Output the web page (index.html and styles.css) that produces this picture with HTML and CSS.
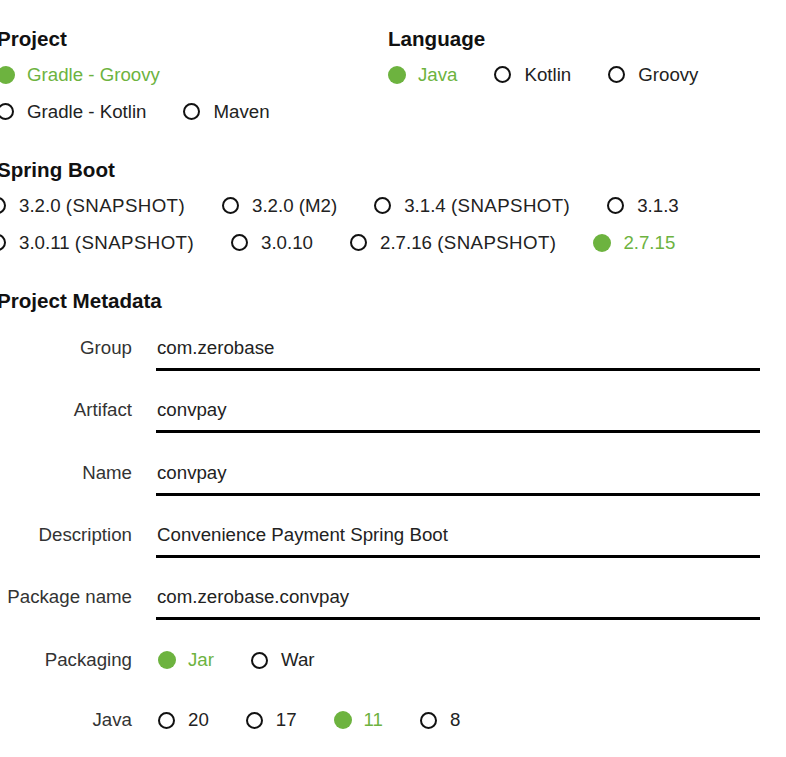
FILE: index.html
```html
<!DOCTYPE html>
<html lang="en">
<head>
<meta charset="utf-8">
<title>Spring Initializr</title>
<link rel="stylesheet" href="styles.css">
</head>
<body>
<main class="page">
  <div class="top-grid">
    <section class="section">
      <h2 class="heading">Project</h2>
      <div class="radio-row">
        <label class="radio checked"><input type="radio" name="project" checked><span>Gradle - Groovy</span></label>
      </div>
      <div class="radio-row">
        <label class="radio"><input type="radio" name="project"><span>Gradle - Kotlin</span></label>
        <label class="radio"><input type="radio" name="project"><span>Maven</span></label>
      </div>
    </section>
    <section class="section">
      <h2 class="heading">Language</h2>
      <div class="radio-row">
        <label class="radio checked"><input type="radio" name="language" checked><span>Java</span></label>
        <label class="radio"><input type="radio" name="language"><span>Kotlin</span></label>
        <label class="radio"><input type="radio" name="language"><span>Groovy</span></label>
      </div>
    </section>
  </div>

  <section class="section">
    <h2 class="heading">Spring Boot</h2>
    <div class="boot-group">
      <div class="radio-row">
        <label class="radio"><input type="radio" name="boot"><span>3.2.0 <span class="snap">(SNAPSHOT)</span></span></label>
        <label class="radio"><input type="radio" name="boot"><span>3.2.0 (M2)</span></label>
        <label class="radio"><input type="radio" name="boot"><span>3.1.4 <span class="snap">(SNAPSHOT)</span></span></label>
        <label class="radio"><input type="radio" name="boot"><span>3.1.3</span></label>
      </div>
      <div class="radio-row">
        <label class="radio"><input type="radio" name="boot"><span>3.0.11 <span class="snap">(SNAPSHOT)</span></span></label>
        <label class="radio"><input type="radio" name="boot"><span>3.0.10</span></label>
        <label class="radio"><input type="radio" name="boot"><span>2.7.16 <span class="snap">(SNAPSHOT)</span></span></label>
        <label class="radio checked"><input type="radio" name="boot" checked><span>2.7.15</span></label>
      </div>
    </div>
  </section>

  <section class="section">
    <h2 class="heading">Project Metadata</h2>
    <div class="meta">
      <div class="field">
        <label class="field-label" for="f-group">Group</label>
        <input class="text-input" id="f-group" type="text" value="com.zerobase">
      </div>
      <div class="field">
        <label class="field-label" for="f-artifact">Artifact</label>
        <input class="text-input" id="f-artifact" type="text" value="convpay">
      </div>
      <div class="field">
        <label class="field-label" for="f-name">Name</label>
        <input class="text-input" id="f-name" type="text" value="convpay">
      </div>
      <div class="field">
        <label class="field-label" for="f-desc">Description</label>
        <input class="text-input" id="f-desc" type="text" value="Convenience Payment Spring Boot">
      </div>
      <div class="field field-last-text">
        <label class="field-label" for="f-pkg">Package name</label>
        <input class="text-input" id="f-pkg" type="text" value="com.zerobase.convpay">
      </div>
      <div class="field field-radio">
        <span class="field-label">Packaging</span>
        <div class="radio-row meta-radios">
          <label class="radio checked"><input type="radio" name="packaging" checked><span>Jar</span></label>
          <label class="radio"><input type="radio" name="packaging"><span>War</span></label>
        </div>
      </div>
      <div class="field field-radio">
        <span class="field-label">Java</span>
        <div class="radio-row meta-radios">
          <label class="radio"><input type="radio" name="java"><span>20</span></label>
          <label class="radio"><input type="radio" name="java"><span>17</span></label>
          <label class="radio checked"><input type="radio" name="java" checked><span>11</span></label>
          <label class="radio"><input type="radio" name="java"><span>8</span></label>
        </div>
      </div>
    </div>
  </section>
</main>
</body>
</html>
```

FILE: styles.css
```css
html, body {
  margin: 0;
  padding: 0;
  background: #ffffff;
}

body {
  font-family: "Liberation Sans", Arial, sans-serif;
  font-size: 18.7px;
  color: #222222;
  overflow: hidden;
}

.page {
  margin-left: -3px;
  padding-top: 26px;
  width: 763px;
}

.top-grid {
  display: grid;
  grid-template-columns: 391px auto;
}

.section {
  margin-bottom: 27px;
}

.heading {
  margin: 0 0 4px;
  font-size: 20.6px;
  font-weight: bold;
  line-height: 26px;
  color: #111111;
}

.radio-row {
  display: flex;
  align-items: center;
  height: 37px;
  white-space: nowrap;
}

.boot-group {
  margin-left: -8px;
}

.snap {
  letter-spacing: 0.4px;
}

.radio {
  display: inline-flex;
  align-items: center;
  margin-right: 37px;
  cursor: pointer;
  line-height: 26px;
}

.radio input {
  appearance: none;
  -webkit-appearance: none;
  box-sizing: border-box;
  width: 17px;
  height: 17px;
  margin: 0 13px 0 0;
  border: 2px solid #111111;
  border-radius: 50%;
  background: #ffffff;
  flex: none;
}

.radio.checked input {
  width: 18px;
  height: 18px;
  margin-right: 12px;
  border: none;
  background: #6db33f;
}

.radio.checked span {
  color: #6db33f;
}

.meta {
  padding-top: 17px;
}

.field {
  display: grid;
  grid-template-columns: 135px 604px;
  column-gap: 21px;
  align-items: start;
  margin-bottom: 26.3px;
}

.field-last-text {
  margin-bottom: 27.3px;
}

.field-label {
  text-align: right;
  line-height: 26px;
  color: #333333;
}

.text-input {
  box-sizing: border-box;
  width: 604px;
  height: 36px;
  margin: 0 0 0 3px;
  padding: 0 0 7px 1px;
  border: none;
  border-bottom: 3px solid #000000;
  border-radius: 0;
  outline: none;
  font-family: inherit;
  font-size: 18.7px;
  line-height: 26px;
  color: #222222;
  background: transparent;
}

.field-radio {
  margin-bottom: 34px;
}

.meta-radios {
  height: 26px;
  margin-left: 5px;
}
```
